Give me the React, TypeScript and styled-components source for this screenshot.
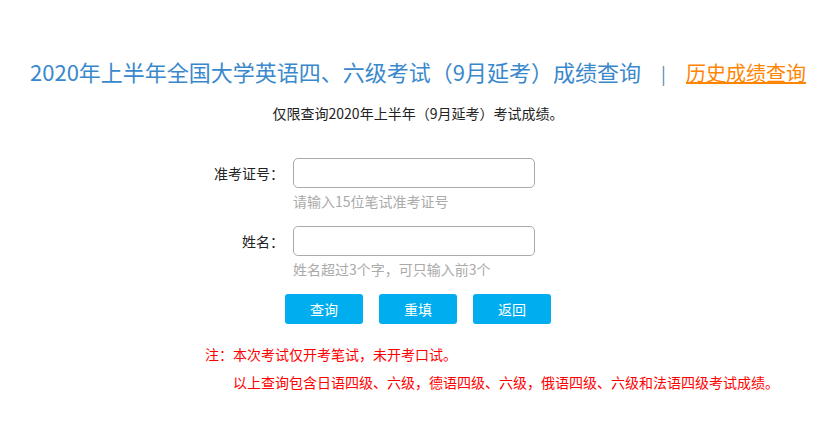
import React from "react";
import styled, { createGlobalStyle } from "styled-components";

const Global = createGlobalStyle`
  html, body { margin: 0; padding: 0; background: #fff; }
  body { font-family: "Noto Sans CJK SC", "Noto Sans", sans-serif; color: #222; }
`;

const Page = styled.div`
  width: 836px;
  padding-top: 56px;
  display: flex;
  flex-direction: column;
`;

const TitleRow = styled.div`
  display: flex;
  justify-content: center;
  align-items: baseline;
  height: 30px;
  line-height: 30px;
`;

const Title = styled.h1`
  margin: 0;
  font-size: 22px;
  font-weight: normal;
  color: #3a88cc;
  white-space: nowrap;
`;

const Sep = styled.span`
  font-size: 18px;
  color: #5a86b3;
  margin: 0 20px;
`;

const HistoryLink = styled.a`
  font-size: 20px;
  color: #ff8400;
  text-decoration: underline;
  white-space: nowrap;
  cursor: pointer;
`;

const Subtitle = styled.p`
  margin: 17px 0 0;
  text-align: center;
  font-size: 14px;
  line-height: 20px;
  color: #222;
`;

const Form = styled.div`
  margin-top: 35px;
  display: grid;
  grid-template-columns: 284px 242px;
  column-gap: 9px;
`;

const Label = styled.label`
  font-size: 14px;
  line-height: 30px;
  height: 30px;
  text-align: right;
  color: #222;
`;

const Input = styled.input`
  box-sizing: border-box;
  width: 242px;
  height: 30px;
  border: 1px solid #aaa;
  border-radius: 5px;
  outline: none;
  padding: 0 6px;
  font-size: 14px;
  font-family: inherit;
  margin: 0;
`;

const Hint = styled.div<{ $last?: boolean }>`
  grid-column: 2;
  margin: 3px 0 ${(p) => (p.$last ? "15px" : "15px")};
  font-size: 14px;
  line-height: 20px;
  color: #aaa;
  white-space: nowrap;
`;

const Buttons = styled.div`
  display: flex;
  justify-content: center;
  gap: 16px;
  padding-left: 0;
`;

const Button = styled.button`
  width: 78px;
  height: 30px;
  border: none;
  border-radius: 3px;
  background: #00aeef;
  color: #fff;
  font-size: 14px;
  font-family: inherit;
  cursor: pointer;
  padding: 0;
`;

const Notes = styled.div`
  margin-top: 20px;
  display: flex;
  flex-direction: column;
  gap: 8px;
`;

const Note = styled.p<{ $indent: number }>`
  margin: 0;
  padding-left: ${(p) => p.$indent}px;
  font-size: 14px;
  line-height: 20px;
  color: #ff0000;
  white-space: nowrap;
`;

export default function App() {
  return (
    <>
      <Global />
      <Page>
        <TitleRow>
          <Title>2020年上半年全国大学英语四、六级考试（9月延考）成绩查询</Title>
          <Sep>|</Sep>
          <HistoryLink>历史成绩查询</HistoryLink>
        </TitleRow>
        <Subtitle>仅限查询2020年上半年（9月延考）考试成绩。</Subtitle>
        <Form>
          <Label htmlFor="zkz">准考证号：</Label>
          <Input id="zkz" type="text" />
          <Hint>请输入15位笔试准考证号</Hint>
          <Label htmlFor="xm">姓名：</Label>
          <Input id="xm" type="text" />
          <Hint $last>姓名超过3个字，可只输入前3个</Hint>
        </Form>
        <Buttons>
          <Button>查询</Button>
          <Button>重填</Button>
          <Button>返回</Button>
        </Buttons>
        <Notes>
          <Note $indent={205}>注：本次考试仅开考笔试，未开考口试。</Note>
          <Note $indent={233}>以上查询包含日语四级、六级，德语四级、六级，俄语四级、六级和法语四级考试成绩。</Note>
        </Notes>
      </Page>
    </>
  );
}
